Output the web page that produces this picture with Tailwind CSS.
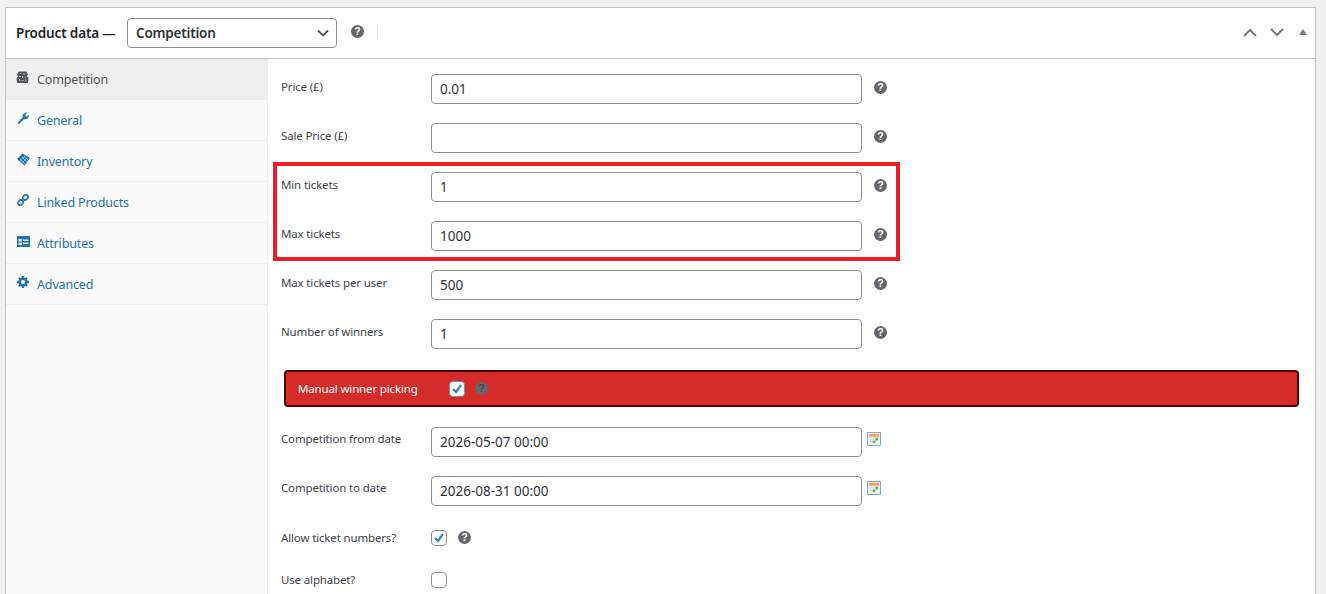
<!DOCTYPE html>
<html lang="en">
<head>
  <meta charset="UTF-8">
  <title>Product data</title>
  <script src="https://cdn.jsdelivr.net/npm/@tailwindcss/browser@4"></script>
</head>
<body class="bg-[#f0f0f1] h-[594px] overflow-hidden font-['Noto_Sans','Open_Sans',sans-serif]">
  <div class="relative ml-[5px] mr-[10px] mt-[7px] h-[600px] bg-white border border-[#c3c4c7]">

    <!-- header -->
    <div class="flex items-center h-[51px] pl-[10px] border-b border-[#c3c4c7]">
      <span class="text-[13.5px] font-semibold tracking-[-0.15px] text-[#1d2327] w-[111px]">Product data —</span>
      <div class="flex items-center justify-between w-[210px] h-[30px] pl-2 pr-[7px] border border-[#8c8f94] rounded-[4px]">
        <span class="text-[13.5px] font-semibold tracking-[-0.2px] text-[#2c3338]">Competition</span>
        <svg class="w-[12px] h-[8px]" viewBox="0 0 12 8" fill="none" stroke="#50575e" stroke-width="1.8"><path d="M1 1.500l5 5 5-5"/></svg>
      </div>
      <svg class="w-[13px] h-[13px] ml-[14px] mb-[3px]" viewBox="0 0 14 14"><circle cx="7" cy="7" r="7" fill="#666"/><text x="7" y="11" text-anchor="middle" font-size="11.500" font-weight="700" fill="#fff" font-family="Liberation Sans">?</text></svg>
      <div class="w-px h-[14px] bg-[#dcdcde] ml-[13px] mb-[3px]"></div>
      <div class="flex items-center ml-auto mr-[8px] mb-[2px]">
        <svg class="w-[14px] h-[9px]" viewBox="0 0 14 9" fill="none" stroke="#787c82" stroke-width="2"><path d="M1 8l6-6 6 6"/></svg>
        <svg class="w-[14px] h-[9px] ml-[13px]" viewBox="0 0 14 9" fill="none" stroke="#787c82" stroke-width="2"><path d="M1 1l6 6 6-6"/></svg>
        <svg class="w-[8px] h-[6px] ml-[15px]" viewBox="0 0 8 6"><path d="M4 0l4 6H0z" fill="#787c82"/></svg>
      </div>
    </div>

    <div class="flex h-[549px]">
      <!-- sidebar -->
      <ul class="w-[262px] shrink-0 bg-[#fafafa] border-r border-[#eeeeee] text-[12.5px] tracking-[-0.15px] text-[#2271b1]">
        <li class="flex items-center h-[41px] pt-[2px] bg-[#eeeeee] text-[#555555] border-b border-[#eeeeee]">
          <svg class="w-[13px] h-[13px] ml-[10px] mr-[8px] mb-[6px]" viewBox="0 0 13 13"><path d="M3 0.500l7.500 0 1.500 3-1 2 1.500 1-.5 5.500H1L.5 7l1.500-1.500-1-2z" fill="#50575e"/><path d="M4 2h1v1H4zM7 2.500h2v1H7zM3 5h2v1H3zM6 5h1v2H6zM9 6h1v1H9zM3 8h1v2H3zM5.500 9h2v1h-2zM9 8.500h1v1.500H9z" fill="#b9b4bc"/></svg>
          Competition
        </li>
        <li class="flex items-center h-[41px] pt-[2px] border-b border-[#eeeeee]">
          <svg class="w-[12px] h-[12px] ml-[11px] mr-[8px] mb-[6px]" viewBox="0 0 12 12"><path d="M1 10.200L5.600 5.400C5.200 3.600 6 1.500 8.400.7c.8-.2 1.400-.2 1.800 0L8.200 2.800l.4 1.400 1.400.4 1.800-2c.3 1.300-.1 2.900-1.300 3.800-1 .8-2.200.9-3.200.6L2.600 11.600c-.6.5-1.200.4-1.600 0-.4-.4-.5-1 0-1.400z" fill="#2271b1"/></svg>
          General
        </li>
        <li class="flex items-center h-[41px] pt-[2px] border-b border-[#eeeeee]">
          <svg class="w-[13px] h-[13px] ml-[11px] mr-[7px] mb-[6px]" viewBox="0 0 13 13"><path d="M0 6L5.500.5 13 5 7.500 12.500z" fill="#2271b1"/><path d="M3 6l5 5M5 4l5 5M7 3l4 4M3 8l5-5M5 10l5-5" stroke="#a8c8e4" stroke-width=".8"/></svg>
          Inventory
        </li>
        <li class="flex items-center h-[41px] pt-[2px] border-b border-[#eeeeee]">
          <svg class="w-[12px] h-[12px] ml-[11px] mr-[8px] mb-[6px]" viewBox="0 0 12 12" fill="none" stroke="#2271b1" stroke-width="1.600"><rect x="5.600" y="1.200" width="5.600" height="4.400" rx="2.200" transform="rotate(-45 8.400 3.400)"/><rect x="0.800" y="6.400" width="5.600" height="4.400" rx="2.200" transform="rotate(-45 3.600 8.600)"/></svg>
          Linked Products
        </li>
        <li class="flex items-center h-[41px] pt-[2px] border-b border-[#eeeeee]">
          <svg class="w-[13px] h-[11px] ml-[10.500px] mr-[7.500px] mb-[6px]" viewBox="0 0 13 11"><path d="M0 0h13v11H0z" fill="#2271b1"/><path d="M1.500 3h3.500v2.500H1.500zM6 3.500h5.500v1.500H6zM1.500 6.500h3.500v2.500H1.500zM6 6.500h5.500v1.500H6z" fill="#dbe8f3"/></svg>
          Attributes
        </li>
        <li class="flex items-center h-[41px] pt-[2px] border-b border-[#eeeeee]">
          <svg class="w-[12px] h-[12px] ml-[11px] mr-[8px] mb-[6px]" viewBox="0 0 12 12"><path d="M5 0h2l.4 1.700 1 .4 1.400-.9 1 1-.9 1.400.4 1L12 5v2l-1.700.4-.4 1 .9 1.400-1 1-1.400-.9-1 .4L7 12H5l-.4-1.700-1-.4-1.400.9-1-1 .9-1.400-.4-1L0 7V5l1.700-.4.4-1-.9-1.400 1-1 1.400.9 1-.4z" fill="#2271b1"/><circle cx="6" cy="6" r="2" fill="#fafafa"/></svg>
          Advanced
        </li>
      </ul>

      <!-- fields -->
      <div class="flex-1 pt-[15px] text-[11.5px] tracking-[-0.15px] text-[#3c434a]">
        <div class="flex h-[49px] pl-[13px]">
          <label class="w-[150px] pt-[4px]">Price (£)</label>
          <div class="flex items-center w-[431px] h-[30px] px-[8px] border border-[#8c8f94] rounded-[4px] text-[13.5px] tracking-normal text-[#2c3338]">0.01</div>
          <svg class="w-[13px] h-[13px] ml-[12px] mt-[7px]" viewBox="0 0 14 14"><circle cx="7" cy="7" r="7" fill="#666"/><text x="7" y="11" text-anchor="middle" font-size="11.500" font-weight="700" fill="#fff" font-family="Liberation Sans">?</text></svg>
        </div>
        <div class="flex h-[49px] pl-[13px]">
          <label class="w-[150px] pt-[4px]">Sale Price (£)</label>
          <div class="flex items-center w-[431px] h-[30px] px-[8px] border border-[#8c8f94] rounded-[4px] text-[13.5px] tracking-normal text-[#2c3338]"></div>
          <svg class="w-[13px] h-[13px] ml-[12px] mt-[7px]" viewBox="0 0 14 14"><circle cx="7" cy="7" r="7" fill="#666"/><text x="7" y="11" text-anchor="middle" font-size="11.500" font-weight="700" fill="#fff" font-family="Liberation Sans">?</text></svg>
        </div>
        <div class="flex h-[49px] pl-[13px]">
          <label class="w-[150px] pt-[4px]">Min tickets</label>
          <div class="flex items-center w-[431px] h-[30px] px-[8px] border border-[#8c8f94] rounded-[4px] text-[13.5px] tracking-normal text-[#2c3338]">1</div>
          <svg class="w-[13px] h-[13px] ml-[12px] mt-[7px]" viewBox="0 0 14 14"><circle cx="7" cy="7" r="7" fill="#666"/><text x="7" y="11" text-anchor="middle" font-size="11.500" font-weight="700" fill="#fff" font-family="Liberation Sans">?</text></svg>
        </div>
        <div class="flex h-[49px] pl-[13px]">
          <label class="w-[150px] pt-[4px]">Max tickets</label>
          <div class="flex items-center w-[431px] h-[30px] px-[8px] border border-[#8c8f94] rounded-[4px] text-[13.5px] tracking-normal text-[#2c3338]">1000</div>
          <svg class="w-[13px] h-[13px] ml-[12px] mt-[7px]" viewBox="0 0 14 14"><circle cx="7" cy="7" r="7" fill="#666"/><text x="7" y="11" text-anchor="middle" font-size="11.500" font-weight="700" fill="#fff" font-family="Liberation Sans">?</text></svg>
        </div>
        <div class="flex h-[49px] pl-[13px]">
          <label class="w-[150px] pt-[4px]">Max tickets per user</label>
          <div class="flex items-center w-[431px] h-[30px] px-[8px] border border-[#8c8f94] rounded-[4px] text-[13.5px] tracking-normal text-[#2c3338]">500</div>
          <svg class="w-[13px] h-[13px] ml-[12px] mt-[7px]" viewBox="0 0 14 14"><circle cx="7" cy="7" r="7" fill="#666"/><text x="7" y="11" text-anchor="middle" font-size="11.500" font-weight="700" fill="#fff" font-family="Liberation Sans">?</text></svg>
        </div>
        <div class="flex h-[49px] pl-[13px]">
          <label class="w-[150px] pt-[4px]">Number of winners</label>
          <div class="flex items-center w-[431px] h-[30px] px-[8px] border border-[#8c8f94] rounded-[4px] text-[13.5px] tracking-normal text-[#2c3338]">1</div>
          <svg class="w-[13px] h-[13px] ml-[12px] mt-[7px]" viewBox="0 0 14 14"><circle cx="7" cy="7" r="7" fill="#666"/><text x="7" y="11" text-anchor="middle" font-size="11.500" font-weight="700" fill="#fff" font-family="Liberation Sans">?</text></svg>
        </div>

        <!-- manual winner banner -->
        <div class="flex items-center ml-[16px] mr-[16px] mt-[2px] mb-[20px] h-[37px] pl-[12px] bg-[#d62b2b] border-2 border-[#4a0000] rounded-[4px] text-white">
          <span class="w-[151px]">Manual winner picking</span>
          <span class="flex items-center justify-center w-[16px] h-[16px] bg-white border border-[#8c8f94] rounded-[4px]">
            <svg class="w-[12px] h-[12px]" viewBox="0 0 12 12" fill="none" stroke="#3582c4" stroke-width="2.200"><path d="M2 6l3 3 5-7"/></svg>
          </span>
          <svg class="w-[13px] h-[13px] ml-[10px]" viewBox="0 0 14 14"><circle cx="7" cy="7" r="7" fill="#666"/><text x="7" y="11" text-anchor="middle" font-size="11.500" font-weight="700" fill="#444" font-family="Liberation Sans">?</text></svg>
        </div>

        <div class="flex h-[49px] pl-[13px]">
          <label class="w-[150px] pt-[3px]">Competition from date</label>
          <div class="flex items-center w-[431px] h-[30px] px-[8px] border border-[#8c8f94] rounded-[4px] text-[13.5px] tracking-normal text-[#2c3338]">2026-05-07 00:00</div>
          <svg class="w-[14px] h-[14px] ml-[5px] mt-[5px]" viewBox="0 0 15 15"><path d="M.5.500h14v14H.5z" fill="#eef3fa" stroke="#6f9bd1"/><path d="M2 2h11v3H2z" fill="#f4a259"/><path d="M3 6h2v2H3zM6 6h2v2H6zM3 9h2v2H3zM9 9h1v1H9z" fill="#c9d0d8"/><path d="M9 6h3v3H9zM6 9h3v3H6z" fill="#6eb36a"/></svg>
        </div>
        <div class="flex h-[49px] pl-[13px]">
          <label class="w-[150px] pt-[3px]">Competition to date</label>
          <div class="flex items-center w-[431px] h-[30px] px-[8px] border border-[#8c8f94] rounded-[4px] text-[13.5px] tracking-normal text-[#2c3338]">2026-08-31 00:00</div>
          <svg class="w-[14px] h-[14px] ml-[5px] mt-[5px]" viewBox="0 0 15 15"><path d="M.5.500h14v14H.5z" fill="#eef3fa" stroke="#6f9bd1"/><path d="M2 2h11v3H2z" fill="#f4a259"/><path d="M3 6h2v2H3zM6 6h2v2H6zM3 9h2v2H3zM9 9h1v1H9z" fill="#c9d0d8"/><path d="M9 6h3v3H9zM6 9h3v3H6z" fill="#6eb36a"/></svg>
        </div>
        <div class="flex items-center h-[25px] pl-[13px]">
          <label class="w-[150px]">Allow ticket numbers?</label>
          <span class="flex items-center justify-center w-[16px] h-[16px] bg-white border border-[#8c8f94] rounded-[4px]">
            <svg class="w-[12px] h-[12px]" viewBox="0 0 12 12" fill="none" stroke="#3582c4" stroke-width="2.200"><path d="M2 6l3 3 5-7"/></svg>
          </span>
          <svg class="w-[13px] h-[13px] ml-[11px]" viewBox="0 0 14 14"><circle cx="7" cy="7" r="7" fill="#666"/><text x="7" y="11" text-anchor="middle" font-size="11.500" font-weight="700" fill="#fff" font-family="Liberation Sans">?</text></svg>
        </div>
        <div class="flex items-center h-[25px] mt-[17px] pl-[13px]">
          <label class="w-[150px]">Use alphabet?</label>
          <span class="w-[16px] h-[16px] bg-white border border-[#8c8f94] rounded-[4px]"></span>
        </div>
      </div>
    </div>

    <!-- red highlight around min/max tickets -->
    <div class="absolute left-[267px] top-[154px] w-[627px] h-[99px] border-4 border-[#ed1c24]"></div>
  </div>
</body>
</html>
